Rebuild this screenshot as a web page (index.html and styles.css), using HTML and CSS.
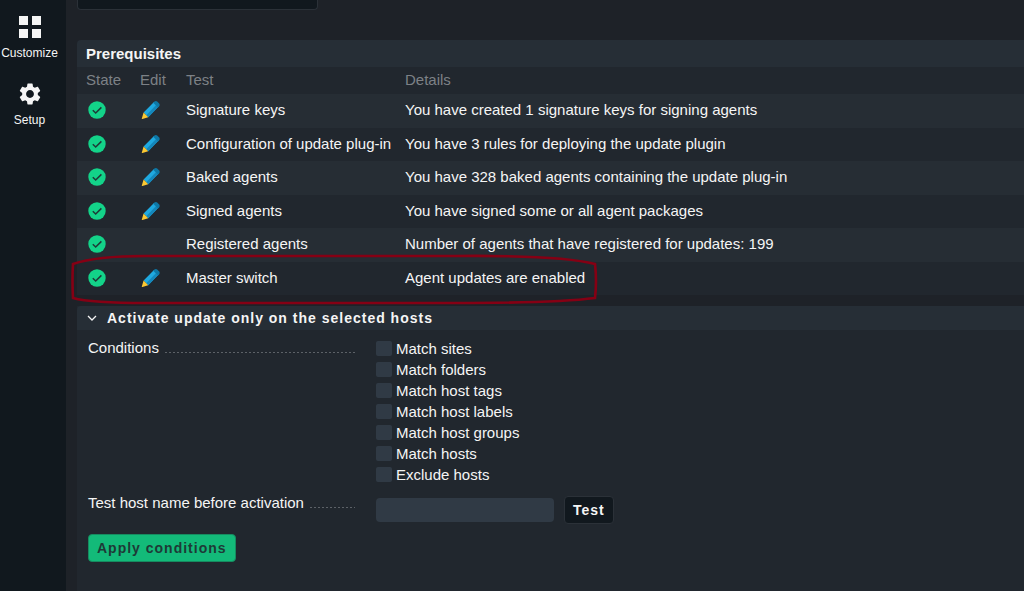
FILE: index.html
```html
<!DOCTYPE html>
<html lang="en">

<head>
    <meta charset="UTF-8">
    <meta name="viewport" content="width=device-width, initial-scale=1.0">
    <title>Automatic agent updates</title>
    <link rel="stylesheet" href="styles.css">
</head>

<body>
<!-- icons used more than once -->
<svg class="icon-defs" aria-hidden="true">
    <symbol id="check" viewBox="0 0 18 18">
        <circle cx="9" cy="9" r="8.7" fill="#13d389"/>
        <path d="M4.8 9.2L7.7 12L13.4 6.4" fill="none" stroke="#1e3a37" stroke-width="1.5"/>
    </symbol>
    <symbol id="pencil" viewBox="0 0 20 20">
        <path d="M2.6 12.6L13 2L17.6 6.6L7.2 17.2z" fill="#1fa9e0"/>
        <path d="M5.2 15.2L15.6 4.6L17.6 6.6L7.2 17.2z" fill="#1487bb"/>
        <path d="M12.2 2.8L13.4 1.6Q14.8 0.6 16.2 1.5L18.2 3.5Q19.4 5 18.2 6.2L17 7.4z" fill="#0e78a6"/>
        <path d="M2.6 12.6L7.2 17.2L1.4 19Q0.6 19.2 0.8 18.4z" fill="#fbc832"/>
    </symbol>
</svg>
<div class="page">
    <nav class="sidebar">
        <a href="#customize">
            <svg class="nav-icon" viewBox="0 0 24 24">
                <path d="M1 1h9v9H1zM14 1h9v9h-9zM1 14h9v9H1zM14 14h9v9h-9z" fill="#f5f5f5"/>
            </svg>
            Customize
        </a>
        <a href="#setup">
            <svg class="nav-icon" viewBox="1 1 22 22">
                <path d="M19.14 12.94c.04-.3.06-.61.06-.94s-.02-.64-.07-.94l2.03-1.58c.18-.14.23-.41.12-.61l-1.92-3.32c-.12-.22-.37-.29-.59-.22l-2.39.96c-.5-.38-1.03-.7-1.62-.94l-.36-2.54c-.04-.24-.24-.41-.48-.41h-3.84c-.24 0-.43.17-.47.41l-.36 2.54c-.59.24-1.13.57-1.62.94l-2.39-.96c-.22-.08-.47 0-.59.22L2.74 8.87c-.12.21-.08.47.12.61l2.03 1.58c-.05.3-.09.63-.09.94s.02.64.07.94l-2.03 1.58c-.18.14-.23.41-.12.61l1.92 3.32c.12.22.37.29.59.22l2.39-.96c.5.38 1.03.7 1.62.94l.36 2.54c.05.24.24.41.48.41h3.84c.24 0 .44-.17.47-.41l.36-2.54c.59-.24 1.13-.56 1.62-.94l2.39.96c.22.08.47 0 .59-.22l1.92-3.32c.12-.22.07-.47-.12-.61zM12 15.6c-1.98 0-3.6-1.62-3.6-3.6s1.62-3.6 3.6-3.6 3.6 1.62 3.6 3.6-1.62 3.6-3.6 3.6z" fill="#f5f5f5"/>
            </svg>
            Setup
        </a>
    </nav>
    <main class="content">
        <div class="message"></div>

        <section class="prerequisites">
            <h2>Prerequisites</h2>
            <table>
                <thead>
                <tr><th class="state">State</th><th class="edit">Edit</th><th class="test">Test</th><th>Details</th></tr>
                </thead>
                <tbody>
                <tr>
                    <td><svg class="check"><use href="#check"/></svg></td>
                    <td><a href="#keys" aria-label="Edit"><svg class="pencil"><use href="#pencil"/></svg></a></td>
                    <td>Signature keys</td>
                    <td>You have created 1 signature keys for signing agents</td>
                </tr>
                <tr>
                    <td><svg class="check"><use href="#check"/></svg></td>
                    <td><a href="#rules" aria-label="Edit"><svg class="pencil"><use href="#pencil"/></svg></a></td>
                    <td>Configuration of update plug-in</td>
                    <td>You have 3 rules for deploying the update plugin</td>
                </tr>
                <tr>
                    <td><svg class="check"><use href="#check"/></svg></td>
                    <td><a href="#baked" aria-label="Edit"><svg class="pencil"><use href="#pencil"/></svg></a></td>
                    <td>Baked agents</td>
                    <td>You have 328 baked agents containing the update plug-in</td>
                </tr>
                <tr>
                    <td><svg class="check"><use href="#check"/></svg></td>
                    <td><a href="#signed" aria-label="Edit"><svg class="pencil"><use href="#pencil"/></svg></a></td>
                    <td>Signed agents</td>
                    <td>You have signed some or all agent packages</td>
                </tr>
                <tr>
                    <td><svg class="check"><use href="#check"/></svg></td>
                    <td></td>
                    <td>Registered agents</td>
                    <td>Number of agents that have registered for updates: 199</td>
                </tr>
                <tr>
                    <td><svg class="check"><use href="#check"/></svg></td>
                    <td><a href="#master" aria-label="Edit"><svg class="pencil"><use href="#pencil"/></svg></a></td>
                    <td>Master switch</td>
                    <td>Agent updates are enabled</td>
                </tr>
                </tbody>
            </table>
            <!-- red marker around the master switch row -->
            <svg class="marker" viewBox="0 0 528 52">
                <path d="M2 11Q25 3 75 3L385 3Q490 2 524 11Q526 28 524 45Q485 50 385 50L75 50Q20 50 2 45Q1 27 2 11z" fill="none" stroke="#850014" stroke-width="2.6"/>
            </svg>
        </section>

        <form class="activate">
            <h2>
                <svg class="arrow" viewBox="0 0 10 6"><path d="M1 1L5 5L9 1" fill="none" stroke="#f5f5f5" stroke-width="1.3"/></svg>
                Activate update only on the selected hosts
            </h2>
            <div class="row">
                <div class="legend">Conditions</div>
                <div class="conditions">
                    <label><input type="checkbox">Match sites</label>
                    <label><input type="checkbox">Match folders</label>
                    <label><input type="checkbox">Match host tags</label>
                    <label><input type="checkbox">Match host labels</label>
                    <label><input type="checkbox">Match host groups</label>
                    <label><input type="checkbox">Match hosts</label>
                    <label><input type="checkbox">Exclude hosts</label>
                </div>
            </div>
            <div class="row">
                <label class="legend" for="host">Test host name before activation</label>
                <div class="host">
                    <input type="text" id="host">
                    <button type="button" class="test-btn">Test</button>
                </div>
            </div>
            <button type="button" class="apply-btn">Apply conditions</button>
        </form>
    </main>
</div>
</body>

</html>
```
FILE: styles.css
```css
* {
    box-sizing: border-box;
    margin: 0;
    padding: 0;
}

body {
    background-color: #1e2228;
    color: #f5f5f5;
    font-family: "Liberation Sans", Arial, sans-serif;
    font-size: 15px;
    line-height: 20px;
}

.icon-defs {
    display: none;
}

.page {
    display: flex;
    min-height: 100vh;
}

.sidebar {
    flex: none;
    width: 66px;
    padding: 15px 7px 0 0;
    background-color: #11181e;
}
.sidebar a {
    display: flex;
    flex-direction: column;
    align-items: center;
    gap: 4px;
    height: 67px;
    color: #f5f5f5;
    font-size: 12px;
    text-decoration: none;
}
.nav-icon {
    flex: none;
    width: 24px;
    height: 24px;
}

.content {
    flex: 1;
    display: flex;
    flex-direction: column;
    padding-left: 11px;
}

.message {
    width: 241px;
    height: 10px;
    margin-bottom: 30px;
    background-color: #11181e;
    border: 1px solid #2b3138;
    border-top: none;
    border-radius: 0 0 4px 4px;
}

h2 {
    background-color: #262e36;
    border-radius: 4px 0 0 0;
    font-size: 14px;
    font-weight: bold;
}

.prerequisites {
    position: relative;
    margin-bottom: 11px;
}
.prerequisites h2 {
    padding: 4px 9px 3px;
    font-size: 15px;
}
table {
    width: 100%;
    border-collapse: collapse;
    table-layout: fixed;
    background-color: #21272e;
}
th {
    height: 27px;
    padding: 0 0 2px 9px;
    color: #7d8186;
    font-weight: normal;
    text-align: left;
}
td {
    height: 33px;
    padding: 0 0 2px 9px;
}
tbody tr:nth-child(odd) {
    background-color: #262d34;
}
tbody tr:nth-child(odd) td {
    height: 34px;
}
.state {
    width: 54px;
}
.edit {
    width: 46px;
}
.test {
    width: 219px;
}
td svg {
    display: block;
}
.check {
    width: 18px;
    height: 18px;
    margin-left: 2px;
}
.pencil {
    width: 20px;
    height: 20px;
    margin-left: 1px;
}
.marker {
    position: absolute;
    left: -6px;
    bottom: -10px;
    width: 528px;
    height: 52px;
}

.activate {
    flex: 1;
    background-color: #21272e;
}
.activate h2 {
    display: flex;
    align-items: center;
    gap: 10px;
    height: 24px;
    padding-left: 10px;
    letter-spacing: 1px;
}
.arrow {
    width: 10px;
    height: 6px;
}
.row {
    display: flex;
    gap: 21px;
    padding: 8px 11px 0 11px;
}
.legend {
    display: flex;
    align-items: flex-start;
    gap: 6px;
    width: 267px;
}
.legend::after {
    content: '';
    flex: 1;
    height: 15px;
    background: repeating-linear-gradient(to right, #5c6167 0 2px, transparent 2px 4px) bottom / 100% 1px no-repeat;
}
.conditions label {
    display: flex;
    align-items: center;
    gap: 4px;
    height: 21px;
}
input[type="checkbox"] {
    appearance: none;
    width: 16px;
    height: 15px;
    background-color: #303a45;
    border-radius: 2px;
}
.host {
    display: flex;
    align-items: center;
    gap: 10px;
    height: 33px;
}
input[type="text"] {
    width: 178px;
    height: 24px;
    background-color: #303a45;
    border: none;
    border-radius: 4px;
    color: #f5f5f5;
}
button {
    height: 28px;
    border-radius: 4px;
    font-family: inherit;
    font-size: 14px;
    font-weight: bold;
    letter-spacing: 1px;
}
.test-btn {
    padding: 0 8px;
    background-color: #11181e;
    border: 1px solid #2b3138;
    color: #f5f5f5;
}
.apply-btn {
    margin: 8px 11px;
    padding: 0 8px;
    background-color: #13ba79;
    border: 1px solid #168b60;
    color: #1e3a37;
}
```
